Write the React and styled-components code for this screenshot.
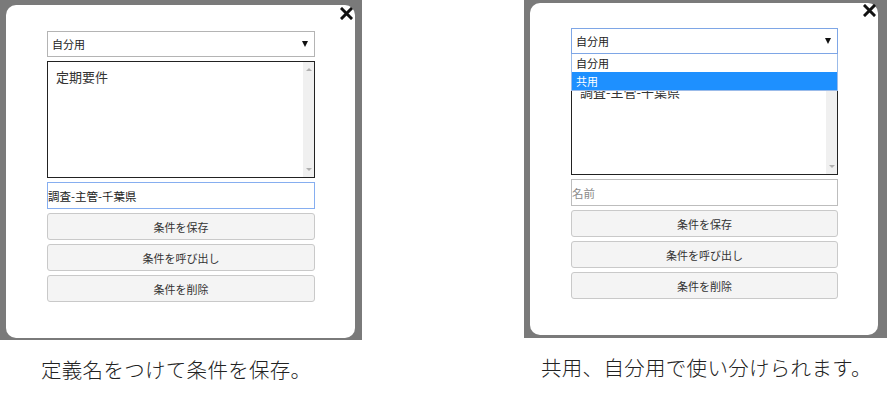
import React from "react";
import styled, { createGlobalStyle } from "styled-components";

const GlobalStyle = createGlobalStyle`
  html, body {
    margin: 0;
    padding: 0;
    background: #ffffff;
  }
  body {
    font-family: "Noto Sans CJK JP", "Noto Sans", sans-serif;
    color: #333;
  }
`;

const Page = styled.div`
  display: flex;
  gap: 162px;
  width: 891px;
  height: 397px;
  overflow: hidden;
`;

const Column = styled.div`
  display: flex;
  flex-direction: column;
  width: ${({w}) => w}px;
`;

const Shot = styled.div`
  display: flex;
  height: ${({h}) => h}px;
  padding: ${({pad}) => pad};
  box-sizing: border-box;
  background: #7a7a7a;
`;

const Modal = styled.div`
  position: relative;
  flex: 1;
  background: #fff;
  border-radius: 10px;
  padding: ${({top}) => top}px 40px 0 41px;
  display: flex;
  flex-direction: column;
  gap: 4px;
`;

const Close = styled.svg`
  position: absolute;
  top: ${({top}) => top}px;
  right: 2px;
`;

const SelectWrap = styled.div`
  position: relative;
`;

const Select = styled.div`
  height: 26px;
  box-sizing: border-box;
  border: 1px solid ${({focus}) => focus ? "#7ea6e6" : "#b4b4b4"};
  display: flex;
  align-items: center;
  justify-content: space-between;
  padding: 0 6px 0 4px;
  font-size: 11px;
  color: #222;
`;

const Arrow = styled.span`
  width: 0;
  height: 0;
  border-left: 3px solid transparent;
  border-right: 3px solid transparent;
  border-top: 6px solid #111;
`;

const Dropdown = styled.div`
  position: absolute;
  left: 0;
  right: 0;
  top: 100%;
  z-index: 2;
  background: #fff;
  border: 1px solid #9bbbe9;
  border-top: none;
  display: flex;
  flex-direction: column;
`;

const Option = styled.div`
  height: 18px;
  padding: 0 4px;
  font-size: 11px;
  line-height: 18px;
  color: ${({active}) => active ? "#fff" : "#222"};
  background: ${({active}) => active ? "#1e90ff" : "#fff"};
`;

const ListBox = styled.div`
  height: 117px;
  box-sizing: border-box;
  border: 1px solid #222;
  display: flex;
`;

const ListItems = styled.div`
  flex: 1;
  padding: 6px 8px;
  font-size: 13px;
  line-height: 18px;
  color: #333;
`;

const Track = styled.div`
  width: 11px;
  background: #f0f0f0;
  display: flex;
  flex-direction: column;
  justify-content: space-between;
  align-items: center;
  padding: 6px 0;
`;

const TrackArrow = styled.span`
  width: 0;
  height: 0;
  border-left: 3px solid transparent;
  border-right: 3px solid transparent;
  ${({up}) => up ? "border-bottom: 3px solid #b0b0b0;" : "border-top: 3px solid #b0b0b0;"}
`;

const Input = styled.div`
  height: 27px;
  box-sizing: border-box;
  border: 1px solid ${({focus}) => focus ? "#86aef0" : "#bdbdbd"};
  display: flex;
  align-items: center;
  font-size: 11.5px;
  color: ${({placeholder}) => placeholder ? "#8a8a8a" : "#222"};
`;

const Button = styled.div`
  height: 27px;
  box-sizing: border-box;
  border: 1px solid #c9c9c9;
  border-radius: 3px;
  background: #f4f4f4;
  display: flex;
  align-items: center;
  justify-content: center;
  font-size: 11px;
  color: #333;
`;

const Caption = styled.div`
  margin-top: 14px;
  padding-left: ${({left}) => left}px;
  font-size: 20.5px;
  font-weight: 300;
  letter-spacing: 0.3px;
  color: #222;
  white-space: nowrap;
`;

function CloseIcon({top}) {
  return (
    <Close top={top} width="13" height="13" viewBox="0 0 13 13">
      <path d="M2 2 L11 11 M11 2 L2 11" stroke="#111" strokeWidth="3" strokeLinecap="square" />
    </Close>
  );
}

const buttons = ["条件を保存", "条件を呼び出し", "条件を削除"];

function Dialog({top, closeTop, items, open, inputText, focusInput}) {
  return (
    <Modal top={top}>
      <CloseIcon top={closeTop} />
      <SelectWrap>
        <Select focus={open}>
          <span>自分用</span>
          <Arrow />
        </Select>
        {open && (
          <Dropdown>
            <Option>自分用</Option>
            <Option active>共用</Option>
          </Dropdown>
        )}
      </SelectWrap>
      <ListBox>
        <ListItems>
          {items.map((x, i) => <div key={i}>{x}</div>)}
        </ListItems>
        <Track>
          <TrackArrow up />
          <TrackArrow />
        </Track>
      </ListBox>
      <Input focus={focusInput} placeholder={!inputText}>
        {inputText || "名前"}
      </Input>
      {buttons.map((b) => <Button key={b}>{b}</Button>)}
    </Modal>
  );
}

export default function App() {
  return (
    <>
      <GlobalStyle />
      <Page>
        <Column w={362}>
          <Shot h={340} pad="5px 7px 2px 6px">
            <Dialog top={26} closeTop={2} items={["定期要件"]} inputText="調査-主管-千葉県" focusInput />
          </Shot>
          <Caption left={41}>定義名をつけて条件を保存。</Caption>
        </Column>
        <Column w={363}>
          <Shot h={338} pad="3px 9px 3px 6px">
            <Dialog top={25} closeTop={1} items={["定期要件", "調査-主管-千葉県"]} open />
          </Shot>
          <Caption left={17}>共用、自分用で使い分けられます。</Caption>
        </Column>
      </Page>
    </>
  );
}
